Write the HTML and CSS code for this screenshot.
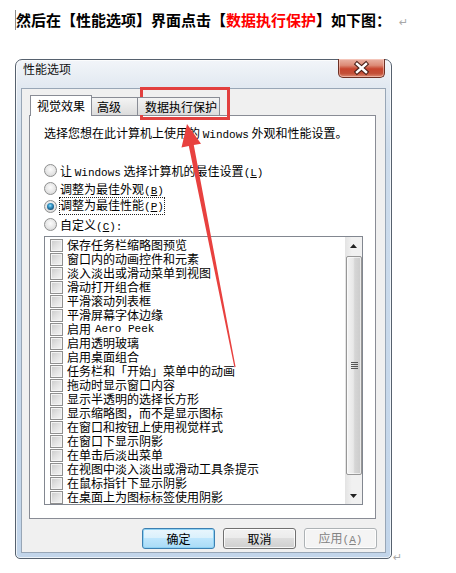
FILE: index.html
```html
<!DOCTYPE html>
<html lang="zh-CN">
<head>
  <meta charset="UTF-8" />
  <title>性能选项</title>
  <link rel="stylesheet" href="styles.css">
</head>
<body>

  <p class="intro">然后在【性能选项】界面点击【<span class="hl">数据执行保护</span>】如下图：<span class="mark">↵</span></p>

  <div class="shot">
    <div class="window">
      <div class="titlebar">
        <span class="title">性能选项</span>
        <button class="close" aria-label="关闭">
          <svg width="45" height="17" viewBox="0 0 45 17">
            <path d="M18 4 L27 12 M27 4 L18 12" stroke="#4a2018" stroke-width="4.5" stroke-linecap="square"/>
            <path d="M18 4 L27 12 M27 4 L18 12" stroke="#fff" stroke-width="2.4" stroke-linecap="square"/>
          </svg>
        </button>
      </div>

      <div class="client">
        <div class="tabs">
          <div class="tab active">视觉效果</div>
          <div class="tab t2">高级</div>
          <div class="tab t3">数据执行保护</div>
        </div>

        <div class="panel">
          <p class="desc">选择您想在此计算机上使用的 <span class="en">Windows</span> 外观和性能设置。</p>

          <div class="options">
            <div class="opt"><span class="radio"></span><span>让 <span class="en">Windows</span> 选择计算机的最佳设置<span class="en">(<u>L</u>)</span></span></div>
            <div class="opt"><span class="radio"></span><span>调整为最佳外观<span class="en">(<u>B</u>)</span></span></div>
            <div class="opt"><span class="radio on"></span><span class="focus">调整为最佳性能<span class="en">(<u>P</u>)</span></span></div>
            <div class="opt"><span class="radio"></span><span>自定义<span class="en">(<u>C</u>):</span></span></div>
          </div>

          <div class="listbox">
            <ul class="items">
              <li><span class="check"></span>保存任务栏缩略图预览</li>
              <li><span class="check"></span>窗口内的动画控件和元素</li>
              <li><span class="check"></span>淡入淡出或滑动菜单到视图</li>
              <li><span class="check"></span>滑动打开组合框</li>
              <li><span class="check"></span>平滑滚动列表框</li>
              <li><span class="check"></span>平滑屏幕字体边缘</li>
              <li><span class="check"></span>启用 <span class="en">Aero Peek</span></li>
              <li><span class="check"></span>启用透明玻璃</li>
              <li><span class="check"></span>启用桌面组合</li>
              <li><span class="check"></span>任务栏和「开始」菜单中的动画</li>
              <li><span class="check"></span>拖动时显示窗口内容</li>
              <li><span class="check"></span>显示半透明的选择长方形</li>
              <li><span class="check"></span>显示缩略图，而不是显示图标</li>
              <li><span class="check"></span>在窗口和按钮上使用视觉样式</li>
              <li><span class="check"></span>在窗口下显示阴影</li>
              <li><span class="check"></span>在单击后淡出菜单</li>
              <li><span class="check"></span>在视图中淡入淡出或滑动工具条提示</li>
              <li><span class="check"></span>在鼠标指针下显示阴影</li>
              <li><span class="check"></span>在桌面上为图标标签使用阴影</li>
            </ul>
            <div class="scrollbar">
              <div class="sb-btn">
                <svg width="7" height="4" viewBox="0 0 7 4"><path d="M0 4 L3.5 0 L7 4 Z" fill="#222"/></svg>
              </div>
              <div class="thumb"><span class="grip"></span></div>
              <div class="sb-btn">
                <svg width="7" height="4" viewBox="0 0 7 4"><path d="M0 0 L7 0 L3.5 4 Z" fill="#222"/></svg>
              </div>
            </div>
          </div>
        </div>

        <div class="buttons">
          <button class="btn default">确定</button>
          <button class="btn">取消</button>
          <button class="btn disabled">应用<span class="en">(<u>A</u>)</span></button>
        </div>
      </div>
    </div>
    <span class="mark end">↵</span>
  </div>

  <!-- red annotation: box round the tab and the arrow pointing at it -->
  <svg class="annot" width="456" height="573" viewBox="0 0 456 573">
    <rect x="141.5" y="88.5" width="87" height="30" fill="none" stroke="#e2403f" stroke-width="3"/>
    <polygon points="187,124 201,143.7 193.8,145.1 235.6,367 234.4,367.2 188.8,146.1 181.5,147.5" fill="#e8413f"/>
  </svg>

</body>
</html>
```

FILE: styles.css
```css
body {
  margin: 0;
  width: 456px;
  height: 573px;
  overflow: hidden;
  position: relative;
  background: #fff;
  color: #000;
  font-family: "Noto Sans CJK SC", sans-serif;
  font-size: 12px;
}

.intro {
  margin: 10px 0 0 15px;
  height: 20px;
  border-left: 1px solid #8c8c8c;
  font-size: 15px;
  font-weight: bold;
  line-height: 20px;
  white-space: nowrap;
  overflow: hidden;
}

.intro .hl {
  color: #f00;
}

.mark {
  font-family: "DejaVu Sans", sans-serif;
  font-weight: normal;
  font-size: 11px;
  line-height: 12px;
  color: #a8a8a8;
  margin-left: 8px;
}

.en {
  font-family: "Liberation Mono", monospace;
  font-size: 11px;
}

u {
  text-decoration: underline;
}

/* screenshot of the dialog */
.shot {
  display: flex;
  align-items: flex-end;
  margin: 29px 0 0 15px;
}

.mark.end {
  margin-left: 1px;
  margin-bottom: -5px;
}

.window {
  width: 377px;
  height: 500px;
  box-sizing: border-box;
  border: 1px solid #56616e;
  border-radius: 7px 7px 5px 5px;
  padding: 0 5px 5px;
  display: flex;
  flex-direction: column;
  background: linear-gradient(180deg, #f2f5f9 0, #e2e9f1 26px, #cddcec 90px, #c2d5ea 100%);
  box-shadow: inset 0 0 0 1px rgba(255, 255, 255, 0.7);
}

.titlebar {
  height: 28px;
  display: flex;
  align-items: flex-start;
  justify-content: space-between;
  padding-left: 2px;
}

.title {
  line-height: 18px;
  color: #111;
}

.close {
  width: 47px;
  height: 19px;
  margin: -1px 1px 0 0;
  padding: 0;
  border: 1px solid #6d3024;
  border-top: none;
  border-radius: 0 0 5px 5px;
  background: linear-gradient(180deg, #eab2a4 0, #dc8b77 35%, #c7452e 55%, #c35038 80%, #dd8a72 100%);
  box-shadow: inset 0 0 0 1px rgba(255, 220, 210, 0.5);
  display: flex;
  align-items: center;
  justify-content: center;
}

.client {
  flex: 1;
  border: 1px solid #98a6b6;
  background: #f0f0f0;
  padding: 6px 9px 0 7px;
  display: flex;
  flex-direction: column;
}

/* tabs */
.tabs {
  display: flex;
  align-items: flex-end;
  height: 21px;
  padding-left: 1px;
  margin-bottom: -1px;
  position: relative;
  z-index: 1;
}

.tab {
  box-sizing: border-box;
  height: 18px;
  margin-bottom: 1px;
  border: 1px solid #898c95;
  border-bottom: none;
  line-height: 17px;
  background: linear-gradient(180deg, #f4f4f4 0, #e8e8e8 50%, #dcdcdc 100%);
  white-space: nowrap;
}

.tab.active {
  width: 62px;
  height: 21px;
  margin-bottom: 0;
  padding-left: 6px;
  line-height: 20px;
  background: #fff;
}

.tab.t2 {
  width: 47px;
  margin-left: -1px;
  padding-left: 5px;
}

.tab.t3 {
  width: 83px;
  margin-left: -1px;
  padding-left: 7px;
}

.panel {
  height: 404px;
  box-sizing: border-box;
  border: 1px solid #898c95;
  background: #fff;
  padding: 8px 12px 0 14px;
}

.desc {
  margin: 0;
  line-height: 17px;
  white-space: nowrap;
}

.options {
  margin-top: 17px;
}

.opt {
  display: flex;
  align-items: center;
  height: 18px;
  gap: 3px;
  white-space: nowrap;
}

.radio {
  width: 13px;
  height: 13px;
  box-sizing: border-box;
  border: 1px solid #8e8f8f;
  border-radius: 50%;
  background: radial-gradient(circle at 50% 40%, #fbfbfb 0, #e6e6e6 55%, #cfcfcf 100%);
  position: relative;
  flex: none;
}

.radio.on::after {
  content: "";
  position: absolute;
  inset: 2px;
  border-radius: 50%;
  background: radial-gradient(circle at 45% 38%, #9fe0fa 0, #3a9ccc 30%, #18557f 70%, #0d3553 100%);
}

.focus {
  border: 1px dotted #222;
  margin-left: -1px;
  line-height: 14px;
}

/* list of effects */
.listbox {
  margin-top: 3px;
  height: 269px;
  box-sizing: border-box;
  border: 1px solid #828790;
  display: flex;
}

.items {
  flex: 1;
  list-style: none;
  margin: 0;
  padding: 1px 0 0 5px;
}

.items li {
  height: 14px;
  line-height: 14px;
  display: flex;
  align-items: center;
  gap: 4px;
  white-space: nowrap;
}

.check {
  width: 13px;
  height: 13px;
  box-sizing: border-box;
  border: 1px solid #8f8f8f;
  background: linear-gradient(135deg, #c9c9c9 0, #e2e2e2 50%, #f6f6f6 100%);
  box-shadow: inset 0 0 0 1px #f3f3f3;
  flex: none;
}

.scrollbar {
  width: 17px;
  display: flex;
  flex-direction: column;
  background: linear-gradient(90deg, #e3e3e3 0, #f1f1f1 40%, #f1f1f1 100%);
}

.sb-btn {
  height: 17px;
  display: flex;
  align-items: center;
  justify-content: center;
}

.thumb {
  flex: 1;
  margin: 2px 0 12px 1px;
  border: 1px solid #979797;
  border-radius: 2px;
  background: linear-gradient(90deg, #f4f4f4 0, #e8e8e8 45%, #d6d6d6 55%, #cbcbcb 100%);
  box-shadow: inset 0 0 0 1px rgba(255, 255, 255, 0.6);
  display: flex;
  align-items: center;
  justify-content: center;
}

.grip {
  width: 7px;
  height: 7px;
  background: repeating-linear-gradient(180deg, #555 0, #555 1px, transparent 1px, transparent 2px);
}

/* dialog buttons */
.buttons {
  display: flex;
  justify-content: flex-end;
  gap: 8px;
  margin-top: 9px;
  margin-right: -1px;
}

.btn {
  width: 73px;
  height: 21px;
  padding: 0;
  border: 1px solid #707070;
  border-radius: 3px;
  background: linear-gradient(180deg, #f2f2f2 0, #ebebeb 50%, #dddddd 50%, #cfcfcf 100%);
  box-shadow: inset 0 0 0 1px rgba(255, 255, 255, 0.8);
  font-family: "Noto Sans CJK SC", sans-serif;
  font-size: 12px;
  line-height: 18px;
  color: #000;
}

.btn.default {
  border-color: #3c7fb1;
  background: linear-gradient(180deg, #e9f6fd 0, #d9f0fc 50%, #bee6fd 50%, #a9dbf6 100%);
  box-shadow: inset 0 0 0 1px #8fd2f4;
}

.btn.disabled {
  border-color: #adb2b5;
  background: #f4f4f4;
  color: #838383;
}

.annot {
  position: absolute;
  top: 0;
  left: 0;
  pointer-events: none;
}
```
